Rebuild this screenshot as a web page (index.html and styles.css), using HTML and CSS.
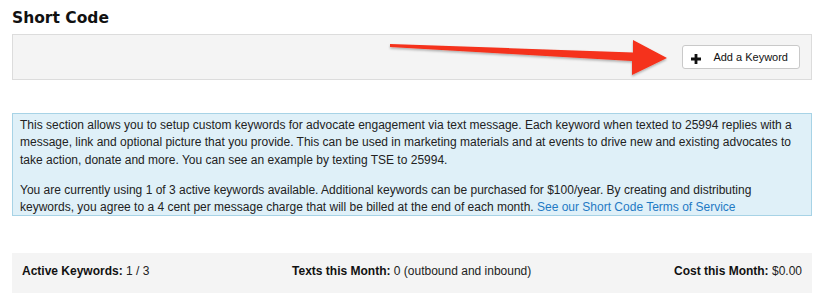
FILE: index.html
```html
<!DOCTYPE html>
<html lang="en">
<head>
  <meta charset="UTF-8">
  <title>Short Code</title>
  <link rel="stylesheet" href="styles.css">
</head>
<body>

  <h1 class="page-title">Short Code</h1>

  <div class="toolbar">
    <button class="add-btn">
      <svg class="plus-icon" width="10" height="10" viewBox="0 0 10 10">
        <path d="M5 0V10M0 5H10" stroke="#111" stroke-width="2.8"/>
      </svg>
      <span>Add a Keyword</span>
    </button>
  </div>

  <div class="info-box">
    <p>This section allows you to setup custom keywords for advocate engagement via text message. Each keyword when texted to 25994 replies with a message, link and optional picture that you provide. This can be used in marketing materials and at events to drive new and existing advocates to take action, donate and more. You can see an example by texting TSE to 25994.</p>
    <p><span>You are currently using 1 of 3 active keywords available. Additional keywords can be purchased for $100/year. By creating and distributing</span>
      <span>keywords, you agree to a 4 cent per message charge that will be billed at the end of each month.</span> <a href="#">See our Short Code Terms of Service</a></p>
  </div>

  <div class="stats">
    <div><strong>Active Keywords:</strong> 1 / 3</div>
    <div><strong>Texts this Month:</strong> 0 (outbound and inbound)</div>
    <div><strong>Cost this Month:</strong> $0.00</div>
  </div>

  <!-- annotation arrow drawn over the toolbar -->
  <svg class="annotation" width="829" height="293" viewBox="0 0 829 293">
    <defs>
      <filter id="shadow" x="-5%" y="-50%" width="110%" height="200%">
        <feDropShadow dx="0" dy="1.5" stdDeviation="1.2" flood-color="#000" flood-opacity="0.3"/>
      </filter>
    </defs>
    <polygon filter="url(#shadow)" fill="#f5301a"
      points="390,44 633,52.5 633,40 667,58 632,75 632,61 390,47"/>
  </svg>

</body>
</html>
```

FILE: styles.css
```css
body {
  margin: 0;
  padding: 0 17px 0 12px;
  background-color: #fff;
  color: #222;
  font-family: "Liberation Sans", Arial, sans-serif;
  font-size: 12px;
}

.page-title {
  font-family: "DejaVu Sans", Verdana, sans-serif;
  font-size: 15.5px;
  line-height: 19px;
  font-weight: bold;
  color: #111;
  margin: 9px 0 6px;
}

.toolbar {
  display: flex;
  justify-content: flex-end;
  height: 46px;
  padding: 10px 11px 0;
  box-sizing: border-box;
  background-color: #f4f4f4;
  border: 1px solid #dcdcdc;
}

.add-btn {
  display: flex;
  align-items: center;
  height: 24px;
  padding: 0 11px 0 8px;
  gap: 12px;
  background-color: #fff;
  border: 1px solid #c9c9c9;
  border-radius: 3px;
  font-family: "Liberation Sans", Arial, sans-serif;
  font-size: 11px;
  color: #111;
  cursor: pointer;
}

.plus-icon {
  margin-top: 3px;
}

.info-box {
  margin-top: 33px;
  padding: 3px 7px 0;
  background-color: #dff0f8;
  border: 1px solid #a7d3e6;
  line-height: 17.3px;
  color: #222;
}

.info-box p {
  margin: 0 0 13px;
}

.info-box p:last-child {
  margin-bottom: -1px;
}

.info-box a {
  color: #1f7ac4;
  text-decoration: none;
}

.stats {
  display: flex;
  justify-content: space-between;
  margin-top: 37px;
  padding: 10px 10px 20px;
  background-color: #f4f4f4;
  line-height: 17px;
  color: #222;
}

.stats strong {
  color: #111;
}

.annotation {
  position: absolute;
  top: 0;
  left: 0;
  pointer-events: none;
}
```
